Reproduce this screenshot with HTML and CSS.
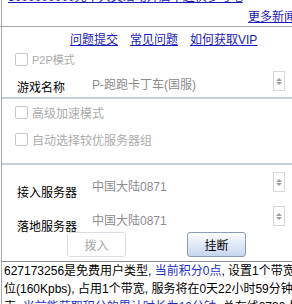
FILE: index.html
```html
<html>
<head>
    <meta charset="UTF-8">
    <title>加速器</title>
    <link rel="stylesheet" href="styles.css">
</head>
<body>
    <div class="page">
        <div class="news">
            <a class="news-head" href="#">3000000000元中大奖活动开启中赶快参与吧</a>
            <a class="more" href="#">更多新闻</a>
        </div>

        <div class="help-links">
            <a href="#">问题提交</a>
            <a href="#">常见问题</a>
            <a href="#">如何获取VIP</a>
        </div>

        <div class="check-row p2p"><span class="box"></span>P2P模式</div>

        <div class="field game">
            <span class="label">游戏名称</span>
            <span class="value">P-跑跑卡丁车(国服)</span>
            <span class="spin"><i class="up"></i><i class="down"></i></span>
        </div>

        <div class="sep"></div>

        <div class="check-row big"><span class="box"></span>高级加速模式</div>
        <div class="check-row big"><span class="box"></span>自动选择较优服务器组</div>

        <div class="sep sep2"></div>

        <div class="field server">
            <span class="label">接入服务器</span>
            <span class="value">中国大陆0871</span>
            <span class="spin"><i class="up"></i><i class="down"></i></span>
        </div>
        <div class="field server">
            <span class="label">落地服务器</span>
            <span class="value">中国大陆0871</span>
            <span class="spin"><i class="up"></i><i class="down"></i></span>
        </div>

        <div class="actions">
            <button class="btn" disabled>拨入</button>
            <button class="btn active">挂断</button>
        </div>

        <div class="status">
            <div class="line">627173256是免费用户类型, <span class="hl">当前积分0点</span>, 设置1个带宽单</div>
            <div class="line">位(160Kpbs), 占用1个带宽, 服务将在0天22小时59分钟后结</div>
            <div class="line">束, <span class="hl">当前能获取积分的累计时长为10分钟</span>, 总在线2730人</div>
        </div>
    </div>
</body>
</html>
```

FILE: styles.css
```css
body { margin: 0; width: 292px; height: 304px; overflow: hidden; background: #fff; font-family: "Liberation Sans", "Noto Sans CJK SC", sans-serif; font-size: 12px; color: #000; }
a { color: #1a1ab8; text-decoration: underline; }
.page { margin-left: 1px; border-left: 1px solid #a8a8a8; height: 304px; }

/* news header */
.news { height: 26px; border-bottom: 1px solid #a4a4a4; position: relative; overflow: hidden; margin-left: -2px; }
.news-head { display: block; margin: -10px 0 0 8px; line-height: 14px; white-space: nowrap; }
.more { display: block; text-align: right; margin-right: -4px; line-height: 14px; margin-top: 6px; white-space: nowrap; }

.help-links { display: flex; gap: 12px; padding-left: 68px; height: 20px; align-items: flex-end; }

.check-row { display: flex; align-items: center; padding-left: 13px; color: #ababab; }
.check-row .box { width: 11px; height: 11px; border: 1px solid #c6c6c6; border-radius: 2px; margin-right: 4px; background: #fff; }
.p2p { height: 24px; font-size: 11px; }
.big { height: 27px; font-size: 12px; }

.field { display: flex; align-items: flex-start; }
.field .label { width: 75px; padding-left: 15px; flex: none; }
.field .value { flex: 1; color: #8c8c8c; }
.spin { width: 10px; height: 18px; border: 1px solid #d8d8d8; margin-right: 7px; display: flex; flex-direction: column; align-items: center; justify-content: center; gap: 1px; }
.spin i { width: 0; height: 0; border-left: 3px solid transparent; border-right: 3px solid transparent; }
.spin .up { border-bottom: 3px solid #a0a0a0; }
.spin .down { border-top: 3px solid #a0a0a0; }

.game { height: 26px; }
.game .label { padding-top: 7px; }
.game .value { padding-top: 4px; }

.sep { height: 2px; background: #c6ced6; }
.sep2 { margin: 10px 0 7px; }

.server { height: 34px; }
.server .label { padding-top: 11px; }
.server .value { padding-top: 5px; }

.actions { display: flex; padding-left: 65px; gap: 61px; margin-top: -8px; }
.btn { width: 59px; height: 25px; border-radius: 3px; font-family: inherit; font-size: 12px; padding: 0; }
.btn[disabled] { background: #fff; border: 1px solid #d9dee5; color: #a8a8a8; }
.btn.active { background: linear-gradient(#fbfcfe, #c6d6ee); border: 1px solid #8c9cb4; color: #000; }

.status { margin-top: 4px; border-top: 1px solid #8c8c8c; padding-left: 2px; white-space: nowrap; line-height: 18px; font-size: 12px; }
.status .hl { color: #1c2fc4; }
```
